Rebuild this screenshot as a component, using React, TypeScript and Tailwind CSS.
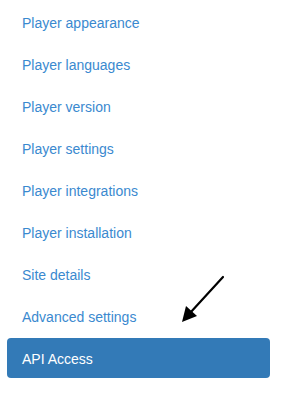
import React from "react";

const items = [
  "Player appearance",
  "Player languages",
  "Player version",
  "Player settings",
  "Player integrations",
  "Player installation",
  "Site details",
  "Advanced settings",
];

export default function App() {
  return (
    <div
      className="relative w-[285px] h-[403px] bg-white"
      style={{ fontFamily: '"Liberation Sans", Arial, sans-serif' }}
    >
      <ul className="flex flex-col pl-[7px] pr-[15px]">
        {items.map((t) => (
          <li key={t} className="mt-[2px]">
            <a className="block px-[15px] pt-[11px] pb-[9px] text-[14px] leading-[20px] text-[#3a89cf] rounded-[4px]">
              {t}
            </a>
          </li>
        ))}
        <li className="mt-[2px]">
          <a className="block px-[15px] pt-[11px] pb-[9px] text-[14px] leading-[20px] text-white bg-[#337ab7] rounded-[4px]">
            API Access
          </a>
        </li>
      </ul>
      <svg
        className="absolute left-0 top-0 pointer-events-none"
        width="285"
        height="403"
        viewBox="0 0 285 403"
      >
        <line x1="223" y1="277" x2="190" y2="313" stroke="#000" strokeWidth="2.2" strokeLinecap="round" />
        <polygon points="182,322 186,306 197,316" fill="#000" />
      </svg>
    </div>
  );
}
